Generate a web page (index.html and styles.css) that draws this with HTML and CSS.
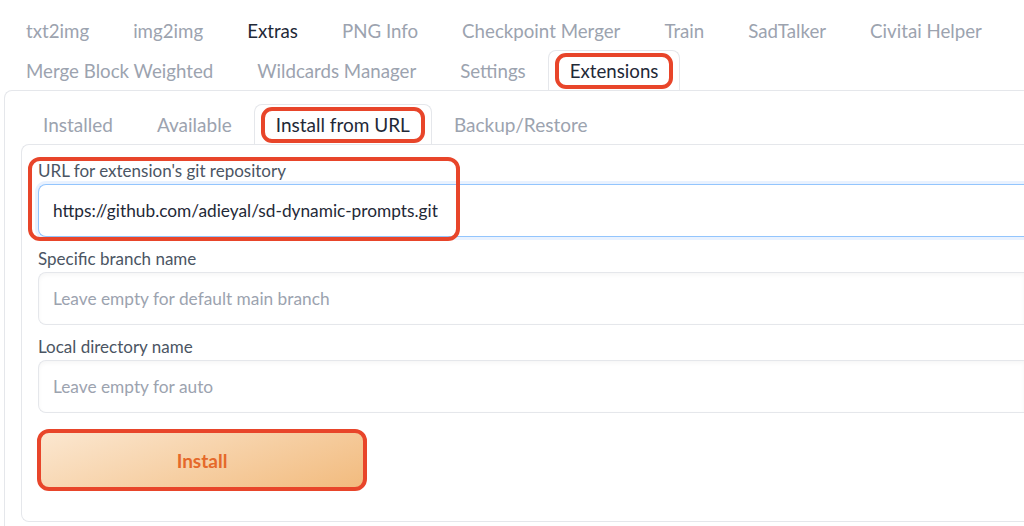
FILE: index.html
```html
<!DOCTYPE html>
<html lang="en">
<head>
<meta charset="UTF-8">
<meta name="viewport" content="width=device-width, initial-scale=1.0">
<title>Extensions</title>
<link rel="stylesheet" href="styles.css">
</head>
<body>
<div class="page">
    <nav class="tabs">
        <div class="tab-row">
            <button class="tab">txt2img</button>
            <button class="tab">img2img</button>
            <button class="tab dark">Extras</button>
            <button class="tab">PNG Info</button>
            <button class="tab">Checkpoint Merger</button>
            <button class="tab">Train</button>
            <button class="tab">SadTalker</button>
            <button class="tab">Civitai Helper</button>
        </div>
        <div class="tab-row">
            <button class="tab">Merge Block Weighted</button>
            <button class="tab">Wildcards Manager</button>
            <button class="tab">Settings</button>
            <button class="tab selected"><span class="mark">Extensions</span></button>
        </div>
    </nav>

    <div class="panel">
        <nav class="tabs inner">
            <div class="tab-row">
                <button class="tab">Installed</button>
                <button class="tab">Available</button>
                <button class="tab selected"><span class="mark">Install from URL</span></button>
                <button class="tab">Backup/Restore</button>
            </div>
        </nav>

        <div class="panel sub">
            <div class="field">
                <div class="highlight"></div>
                <label for="url">URL for extension's git repository</label>
                <input type="text" id="url" class="focused" value="https://github.com/adieyal/sd-dynamic-prompts.git">
            </div>
            <div class="field">
                <label for="branch">Specific branch name</label>
                <input type="text" id="branch" placeholder="Leave empty for default main branch">
            </div>
            <div class="field">
                <label for="dir">Local directory name</label>
                <input type="text" id="dir" placeholder="Leave empty for auto">
            </div>
            <button class="install">Install</button>
        </div>
    </div>
</div>
</body>
</html>
```

FILE: styles.css
```css
/* Gradio-lignende oppsett */
body {
    margin: 0;
    font-family: Lato, "Noto Sans", sans-serif;
    background: #fff;
    overflow: hidden;
}
.page {
    padding: 10px 0 0 4px;
}
.tabs {
    display: flex;
    flex-direction: column;
}
.tab-row {
    display: flex;
}
.tab {
    height: 40px;
    padding: 0 21px;
    font-family: inherit;
    font-size: 18.7px;
    color: #9ca3af;
    background: none;
    border: 1px solid transparent;
    border-bottom: none;
    white-space: nowrap;
    cursor: pointer;
}
.tab.dark {
    color: #1f2937;
}
.tab.selected {
    color: #1f2937;
    padding: 0 6px;
    background: #fff;
    border-color: #e5e7eb;
    border-radius: 8px 8px 0 0;
    margin-bottom: -1px;
    position: relative;
    z-index: 1;
}
.mark {
    display: inline-block;
    padding: 0 11px;
    height: 28px;
    line-height: 28px;
    border: 4px solid #e8452a;
    border-radius: 11px;
}
.panel {
    border: 1px solid #e5e7eb;
    border-right: none;
    border-bottom: none;
    border-radius: 8px 0 0 0;
    padding: 13px 0 5px 16px;
    background: #fff;
}
.tabs.inner .tab {
    font-size: 19px;
}
.panel.sub {
    border-bottom: 1px solid #e5e7eb;
    border-radius: 8px 0 0 8px;
    padding: 16px 0 30px 16px;
}
.field {
    position: relative;
    display: flex;
    flex-direction: column;
    gap: 3px;
    margin-bottom: 12px;
}
.highlight {
    position: absolute;
    left: -10px;
    top: -4px;
    width: 432px;
    height: 84px;
    box-sizing: border-box;
    border: 4px solid #e8452a;
    border-radius: 12px;
    z-index: 2;
    pointer-events: none;
}
label {
    font-size: 17px;
    line-height: 20px;
    color: #4b5563;
}
input[type="text"] {
    height: 53px;
    box-sizing: border-box;
    padding: 0 14px;
    font-family: inherit;
    font-size: 17.3px;
    color: #1f2937;
    border: 1px solid #e5e7eb;
    border-right: none;
    border-radius: 8px 0 0 8px;
    box-shadow: inset 0 2px 4px rgba(0, 0, 0, 0.04);
    outline: none;
}
input::placeholder {
    color: #9ca3af;
}
input.focused {
    border-color: #93c5fd;
    box-shadow: 0 0 0 3px rgba(191, 219, 254, 0.35);
}
.install {
    margin-top: 4px;
    width: 330px;
    height: 62px;
    margin-left: -1px;
    font-family: inherit;
    font-size: 19px;
    font-weight: bold;
    color: #e5692a;
    background: linear-gradient(160deg, #fbe7d0, #f2bb7e);
    border: 4px solid #e8452a;
    border-radius: 12px;
    cursor: pointer;
}
```
